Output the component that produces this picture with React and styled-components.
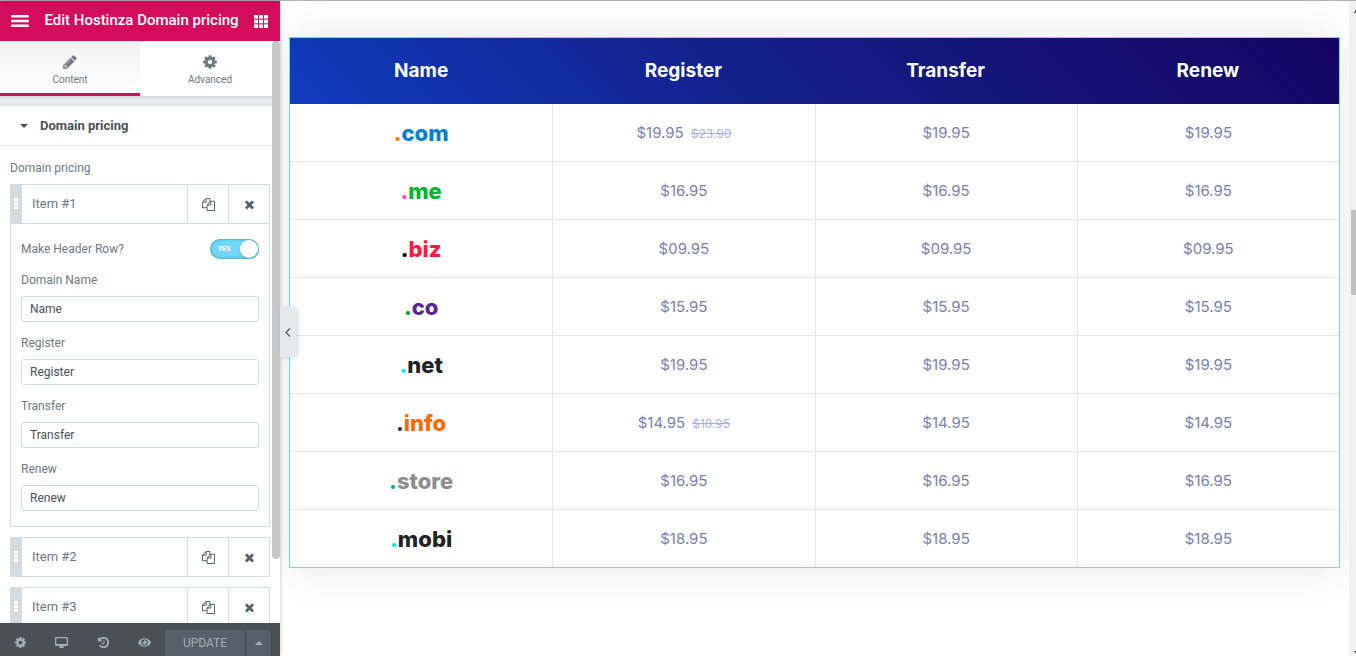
import React, { useState } from "react";
import styled, { createGlobalStyle } from "styled-components";
import { FaEye } from "react-icons/fa";

const GlobalStyle = createGlobalStyle`
  *, *::before, *::after { box-sizing: border-box; }
  body { margin: 0; overflow: hidden; background: #fff; font-family: Roboto, "Liberation Sans", sans-serif; }
  button, input { font-family: inherit; }
  button { cursor: pointer; }
`;

const border = "#d5dadf";

const Page = styled.div`
  display: flex;
  height: 100vh;
  border-top: 1px solid #b1b1b1;
`;

const Panel = styled.aside`
  position: relative;
  z-index: 2;
  display: flex;
  flex-direction: column;
  flex: 0 0 280px;
  min-width: 0;
  background: #fff;
  box-shadow: 0 0 4px rgba(0, 0, 0, 0.25);
`;

const PanelHeader = styled.header`
  display: flex;
  align-items: center;
  justify-content: space-between;
  flex: 0 0 40px;
  padding: 0 12px 0 11px;
  background: #d30c5c;
  color: #fff;
`;

const PanelTitle = styled.h1`
  margin: 0;
  padding-bottom: 2px;
  font-size: 15px;
  line-height: 20px;
  font-weight: 500;
`;

const IconButton = styled.button`
  display: flex;
  align-items: center;
  justify-content: center;
  padding: 0;
  border: 0;
  background: none;
  color: inherit;
`;

const PanelBody = styled.div`
  display: flex;
  flex: 1;
  min-height: 0;
  overflow: hidden;
`;

const Scroller = styled.div`
  flex: 1;
  min-width: 0;
  overflow: hidden;
`;

const ScrollTrack = styled.div`
  flex: 0 0 8px;
  background: linear-gradient(#fff 55px, #e6e9ec 55px, #e6e9ec 65px, #fff 65px);
`;

const ScrollThumb = styled.div`
  height: 89%;
  border-radius: 4px;
  background: #c7c7c7;
`;

const Tabs = styled.nav`
  display: flex;
  width: 280px;
`;

const Tab = styled.button`
  display: flex;
  flex-direction: column;
  align-items: center;
  justify-content: flex-end;
  gap: 3px;
  flex: 1;
  height: 55px;
  padding: 0 0 ${(p) => (p.$active ? 6 : 9)}px;
  border: 0;
  border-bottom: ${(p) => (p.$active ? "3px solid #d30c5c" : "0")};
  background: ${(p) => (p.$active ? "linear-gradient(#f2f2f2, #fff)" : "#fff")};
  color: #6d7882;
  font-size: 10px;
  line-height: 14px;
`;

const Strip = styled.div`
  height: 10px;
  background: #e6e9ec;
  box-shadow: inset 0 3px 3px -2px rgba(0, 0, 0, 0.12);
`;

const SectionToggle = styled.button`
  display: flex;
  align-items: center;
  gap: 12px;
  width: 100%;
  height: 40px;
  padding: 0 20px;
  border: 0;
  border-bottom: 1px solid #e6e9ec;
  background: #fff;
  color: #495157;
  font-size: 13px;
  font-weight: 700;
`;

const Controls = styled.section`
  display: flex;
  flex-direction: column;
  gap: 10px;
  padding: 15px 2px 0 10px;
`;

const Caption = styled.span`
  margin-bottom: -2px;
  color: #6d7882;
  font-size: 12px;
  line-height: 15px;
`;

const Item = styled.div`
  flex: none;
  border: 1px solid ${border};
`;

const ItemHead = styled.div`
  display: flex;
  height: 38px;
`;

const Handle = styled.span`
  display: flex;
  align-items: center;
  justify-content: center;
  flex: 0 0 11px;
  padding: 0 1px 2px 0;
  background: ${border};
  color: #fff;
`;

const ItemTitle = styled.button`
  flex: 1;
  padding: 0 10px 2px;
  border: 0;
  background: none;
  color: #6d7882;
  font-size: 13px;
  text-align: left;
`;

const ItemTool = styled(IconButton)`
  flex: 0 0 41px;
  border-left: 1px solid ${border};
  color: #556068;
`;

const ItemBody = styled.div`
  display: flex;
  flex-direction: column;
  gap: 14px;
  padding: 15px 10px;
  border-top: 1px solid ${border};
`;

const SwitchRow = styled.label`
  display: flex;
  align-items: center;
  justify-content: space-between;
  height: 20px;
  color: #6d7882;
  font-size: 12px;
`;

const Switch = styled.span`
  position: relative;
  display: flex;
  align-items: center;
  justify-content: flex-end;
  width: 49px;
  height: 20px;
  padding: 0 1px 0 8px;
  border-radius: 10px;
  background: ${(p) => (p.$on ? "#71d7f7" : "#c2cbd2")};
  box-shadow: inset 0 0 3px rgba(0, 80, 120, 0.6);
  color: #fff;
  font-size: 7px;
  font-weight: 700;
  flex-direction: ${(p) => (p.$on ? "row" : "row-reverse")};
`;

const SwitchInput = styled.input`
  position: absolute;
  inset: 0;
  width: 100%;
  height: 100%;
  margin: 0;
  opacity: 0;
`;

const SwitchText = styled.span`
  flex: 1;
`;

const Knob = styled.span`
  width: 18px;
  height: 18px;
  border-radius: 50%;
  background: #fff;
  box-shadow: 0 1px 2px rgba(0, 0, 0, 0.2);
`;

const Field = styled.label`
  display: flex;
  flex-direction: column;
  gap: 8px;
  color: #6d7882;
  font-size: 12px;
  line-height: 15px;
`;

const TextInput = styled.input`
  width: 100%;
  height: 26px;
  padding: 0 8px;
  border: 1px solid ${border};
  border-radius: 3px;
  outline: 0;
  background: #fff;
  color: #495157;
  font-size: 12px;
`;

const Footer = styled.footer`
  display: flex;
  flex: 0 0 33px;
  padding-right: 9px;
  background: #495157;
  color: #a4afb7;
`;

const FooterTool = styled(IconButton)`
  flex: 1;
  padding-top: 6px;
`;

const UpdateGroup = styled.div`
  display: flex;
  align-items: stretch;
  gap: 1px;
  flex: 0 0 106px;
  padding-top: 7px;
`;

const UpdateButton = styled(IconButton)`
  flex: ${(p) => (p.$narrow ? "0 0 25px" : "1")};
  border-radius: ${(p) => (p.$narrow ? "0 3px 0 0" : "3px 0 0 0")};
  background: #556068;
  font-size: 12px;
`;

const Collapse = styled.button`
  position: absolute;
  top: 306px;
  left: 280px;
  display: flex;
  align-items: center;
  justify-content: center;
  width: 16px;
  height: 50px;
  padding: 0;
  border: 0;
  border-radius: 0 3px 3px 0;
  background: #e6e9ec;
  box-shadow: 2px 1px 4px rgba(0, 0, 0, 0.15);
  color: #556068;
`;

const Preview = styled.main`
  flex: 1;
  min-width: 0;
  padding: 36px 9px 0;
  overflow: hidden;
`;

const PriceTable = styled.table`
  width: 100%;
  table-layout: fixed;
  border-spacing: 0;
  border: 1px solid #71d7f7;
  background: #fff;
  box-shadow: 0 0 40px rgba(0, 0, 0, 0.1);
  font-family: Inter, "Liberation Sans", sans-serif;
  text-align: center;
`;

const HeadRow = styled.tr`
  height: 66px;
  background: linear-gradient(45deg, #103cbe 0%, #131f88 45%, #150460 100%);
  color: #fff;
`;

const HeadCell = styled.th`
  padding: 0 0 2px;
  font-size: 19px;
  font-weight: 700;
`;

const Row = styled.tr`
  height: 58px;
  &:not(:last-child) > * { border-bottom: 1px solid #e7e7e7; }
  &:last-child { height: 57px; }
`;

const Cell = styled.td`
  padding: 0;
  border-left: 1px solid #e7e7e7;
  color: #7a80ad;
  font-size: 15px;
`;

const NameCell = styled.th`
  padding: 0;
  color: ${(p) => p.$color};
  font-size: 22px;
  line-height: 28px;
  font-weight: 800;
`;

const Dot = styled.span`
  color: ${(p) => p.$color};
`;

const OldPrice = styled.del`
  margin-left: 7px;
  color: #a6b0e0;
  font-size: 12px;
`;

const PageScroll = styled.div`
  display: flex;
  flex-direction: column;
  align-items: flex-end;
  justify-content: space-between;
  flex: 0 0 7px;
  padding: 9px 0 2px;
  background: #f1f1f1;
`;

const PageTrack = styled.div`
  flex: 1;
  padding-top: 197px;
`;

const PageThumb = styled.div`
  width: 5px;
  height: 85px;
  background: #c1c1c1;
`;

const glyphs = {
  pencil:
    "M491 1536l91-91-235-235-91 91v107h128v128h107zM1014 608q0-22-22-22-10 0-17 7l-542 542q-7 7-7 17 0 22 22 22 10 0 17-7l542-542q7-7 7-17zM960 416l416 416-832 832h-416v-416zM1643 512q0 53-37 90l-166 166-416-416 166-165q36-38 90-38 53 0 91 38l235 234q37 39 37 91z",
  cog: "M1152 896q0-106-75-181t-181-75-181 75-75 181 75 181 181 75 181-75 75-181zm512-109v222q0 12-8 23t-20 13l-185 28q-19 54-39 91 35 50 107 138 10 12 10 25t-9 23q-27 37-99 108t-94 71q-12 0-26-9l-138-108q-44 23-91 38-16 136-29 186-7 28-36 28h-222q-14 0-24.5-8.5t-11.5-21.5l-28-184q-49-16-90-37l-141 107q-10 9-25 9-14 0-25-11-126-114-165-168-7-10-7-23 0-12 8-23 15-21 51-66.5t54-70.5q-27-50-41-99l-183-27q-13-2-21-12.5t-8-23.5v-222q0-12 8-23t19-13l186-28q14-46 39-92-40-57-107-138-10-12-10-24 0-10 9-23 26-36 98.5-107.5t94.5-71.5q13 0 26 10l138 107q44-23 91-38 16-136 29-186 7-28 36-28h222q14 0 24.5 8.5t11.5 21.5l28 184q49 16 90 37l142-107q9-9 24-9 13 0 25 10 129 119 165 170 7 8 7 22 0 12-8 23-15 21-51 66.5t-54 70.5q26 50 41 98l183 28q13 2 21 12.5t8 23.5z",
  copy: "M1696 384q40 0 68 28t28 68v1216q0 40-28 68t-68 28h-960q-40 0-68-28t-28-68v-288h-544q-40 0-68-28t-28-68v-672q0-40 20-88t48-76l408-408q28-28 76-48t88-20h416q40 0 68 28t28 68v328q68-40 128-40h416zm-544 213l-299 299h299v-299zm-640-384l-299 299h299v-299zm196 647l316-316v-416h-384v416q0 40-28 68t-68 28h-416v640h512v-256q0-40 20-88t48-76zm956 804v-1152h-384v416q0 40-28 68t-68 28h-416v640h896z",
  times:
    "M1490 1322q0 40-28 68l-136 136q-28 28-68 28t-68-28l-294-294-294 294q-28 28-68 28t-68-28l-136-136q-28-28-28-68t28-68l294-294-294-294q-28-28-28-68t28-68l136-136q28-28 68-28t68 28l294 294 294-294q28-28 68-28t68 28l136 136q28 28 28 68t-28 68l-294 294 294 294q28 28 28 68z",
  history:
    "M1664 896q0 156-61 298t-164 245-245 164-298 61q-172 0-327-72.5t-264-204.5q-7-10-6.5-22.5t8.5-20.5l137-138q10-9 25-9 16 2 23 12 73 95 179 147t225 52q104 0 198.5-40.5t163.5-109.5 109.5-163.5 40.5-198.5-40.5-198.5-109.5-163.5-163.5-109.5-198.5-40.5q-98 0-188 35.5t-160 101.5l137 138q31 30 14 69-17 40-59 40h-448q-26 0-45-19t-19-45v-448q0-42 40-59 39-17 69 14l130 129q107-101 244.5-156.5t284.5-55.5q156 0 298 61t245 164 164 245 61 298zm-640-288v448q0 14-9 23t-23 9h-320q-14 0-23-9t-9-23v-64q0-14 9-23t23-9h224v-352q0-14 9-23t23-9h64q14 0 23 9t9 23z",
};

function Glyph({ name, size }) {
  return (
    <svg width={size} height={size} viewBox="0 0 1792 1792" fill="currentColor" aria-hidden="true">
      <path d={glyphs[name]} />
    </svg>
  );
}

const MenuIcon = () => (
  <svg width="18" height="12" viewBox="0 0 18 12" fill="currentColor" aria-hidden="true">
    <rect width="18" height="2.400" rx="1" />
    <rect y="4.800" width="18" height="2.400" rx="1" />
    <rect y="9.600" width="18" height="2.400" rx="1" />
  </svg>
);

const GridIcon = () => (
  <svg width="14" height="13" viewBox="0 0 14 13" fill="currentColor" aria-hidden="true">
    {[0, 5, 10].map((x) =>
      [0, 4.7, 9.4].map((y) => <rect key={`${x}-${y}`} x={x} y={y} width="4" height="3.600" />)
    )}
  </svg>
);

const DesktopIcon = () => (
  <svg width="13" height="12" viewBox="0 0 13 12" fill="currentColor" fillRule="evenodd" aria-hidden="true">
    <path d="M1 0h11q1 0 1 1v7q0 1-1 1H8l1 2H4l1-2H1Q0 9 0 8V1q0-1 1-1zM1.300 1.300v5.700h10.400V1.300z" />
  </svg>
);

const Caret = ({ up }) => (
  <svg width="8" height="4" viewBox="0 0 8 4" fill="currentColor" aria-hidden="true">
    <path d={up ? "M0 4L4 0L8 4z" : "M0 0H8L4 4z"} />
  </svg>
);

const GripIcon = () => (
  <svg width="4" height="11" viewBox="0 0 4 11" fill="currentColor" aria-hidden="true">
    <path d="M0 0h4v3H0zM0 4h4v3H0zM0 8h4v3H0z" />
  </svg>
);

const LeftIcon = () => (
  <svg width="6" height="9" viewBox="0 0 6 9" fill="none" stroke="currentColor" strokeWidth="1.300" aria-hidden="true">
    <path d="M5 0.500L1 4.500L5 8.500" />
  </svg>
);

const ScrollArrow = ({ down }) => (
  <svg width="2" height="3" viewBox="0 0 2 3" fill="#505050" aria-hidden="true">
    <path d={down ? "M0 0H2V2H1V1H0z" : "M0 3H2V0H1V2H0z"} />
  </svg>
);

const fields = [
  ["Domain Name", "Name"],
  ["Register", "Register"],
  ["Transfer", "Transfer"],
  ["Renew", "Renew"],
];

const domains = [
  { name: "com", color: "#0080d0", dot: "#ff7a00", price: "$19.95", old: "$23.90" },
  { name: "me", color: "#00b52e", dot: "#ff40f0", price: "$16.95" },
  { name: "biz", color: "#ff1a45", dot: "#000", price: "$09.95" },
  { name: "co", color: "#5e2491", dot: "#00a31a", price: "$15.95" },
  { name: "net", color: "#232323", dot: "#00e8f8", price: "$19.95" },
  { name: "info", color: "#ff6a00", dot: "#333", price: "$14.95", old: "$18.95" },
  { name: "store", color: "#8e8e8e", dot: "#10a8b8", price: "$16.95" },
  { name: "mobi", color: "#232323", dot: "#00e8f8", price: "$18.95" },
];

function RepeaterItem({ title, children }) {
  return (
    <Item>
      <ItemHead>
        <Handle><GripIcon /></Handle>
        <ItemTitle type="button">{title}</ItemTitle>
        <ItemTool type="button" aria-label={`Duplicate ${title}`}><Glyph name="copy" size={13} /></ItemTool>
        <ItemTool type="button" aria-label={`Remove ${title}`}><Glyph name="times" size={13} /></ItemTool>
      </ItemHead>
      {children}
    </Item>
  );
}

export default function App() {
  const [header, setHeader] = useState(true);
  return (
    <Page>
      <GlobalStyle />
      <Panel>
        <PanelHeader>
          <IconButton type="button" aria-label="Menu"><MenuIcon /></IconButton>
          <PanelTitle>Edit Hostinza Domain pricing</PanelTitle>
          <IconButton type="button" aria-label="Widgets"><GridIcon /></IconButton>
        </PanelHeader>
        <PanelBody>
          <Scroller>
            <Tabs>
              <Tab type="button" $active><Glyph name="pencil" size={16} />Content</Tab>
              <Tab type="button"><Glyph name="cog" size={16} />Advanced</Tab>
            </Tabs>
            <Strip />
            <SectionToggle type="button"><Caret />Domain pricing</SectionToggle>
            <Controls>
              <Caption>Domain pricing</Caption>
              <RepeaterItem title="Item #1">
                <ItemBody>
                  <SwitchRow>
                    Make Header Row?
                    <Switch $on={header}>
                      <SwitchInput type="checkbox" checked={header} onChange={(e) => setHeader(e.target.checked)} />
                      <SwitchText>{header ? "YES" : "NO"}</SwitchText>
                      <Knob />
                    </Switch>
                  </SwitchRow>
                  {fields.map(([label, value]) => (
                    <Field key={label}>
                      {label}
                      <TextInput type="text" defaultValue={value} />
                    </Field>
                  ))}
                </ItemBody>
              </RepeaterItem>
              <RepeaterItem title="Item #2" />
              <RepeaterItem title="Item #3" />
            </Controls>
          </Scroller>
          <ScrollTrack><ScrollThumb /></ScrollTrack>
        </PanelBody>
        <Footer>
          <FooterTool type="button" aria-label="Settings"><Glyph name="cog" size={13} /></FooterTool>
          <FooterTool type="button" aria-label="Responsive mode"><DesktopIcon /></FooterTool>
          <FooterTool type="button" aria-label="History"><Glyph name="history" size={13} /></FooterTool>
          <FooterTool type="button" aria-label="Preview"><FaEye size={13} /></FooterTool>
          <UpdateGroup>
            <UpdateButton type="button">UPDATE</UpdateButton>
            <UpdateButton type="button" $narrow aria-label="Save options"><Caret up /></UpdateButton>
          </UpdateGroup>
        </Footer>
        <Collapse type="button" aria-label="Hide panel"><LeftIcon /></Collapse>
      </Panel>
      <Preview>
        <PriceTable>
          <thead>
            <HeadRow>
              {fields.map(([, title]) => <HeadCell key={title} scope="col">{title}</HeadCell>)}
            </HeadRow>
          </thead>
          <tbody>
            {domains.map((d) => (
              <Row key={d.name}>
                <NameCell scope="row" $color={d.color}><Dot $color={d.dot}>.</Dot>{d.name}</NameCell>
                <Cell>{d.price}{d.old && <OldPrice>{d.old}</OldPrice>}</Cell>
                <Cell>{d.price}</Cell>
                <Cell>{d.price}</Cell>
              </Row>
            ))}
          </tbody>
        </PriceTable>
      </Preview>
      <PageScroll>
        <ScrollArrow />
        <PageTrack><PageThumb /></PageTrack>
        <ScrollArrow down />
      </PageScroll>
    </Page>
  );
}
